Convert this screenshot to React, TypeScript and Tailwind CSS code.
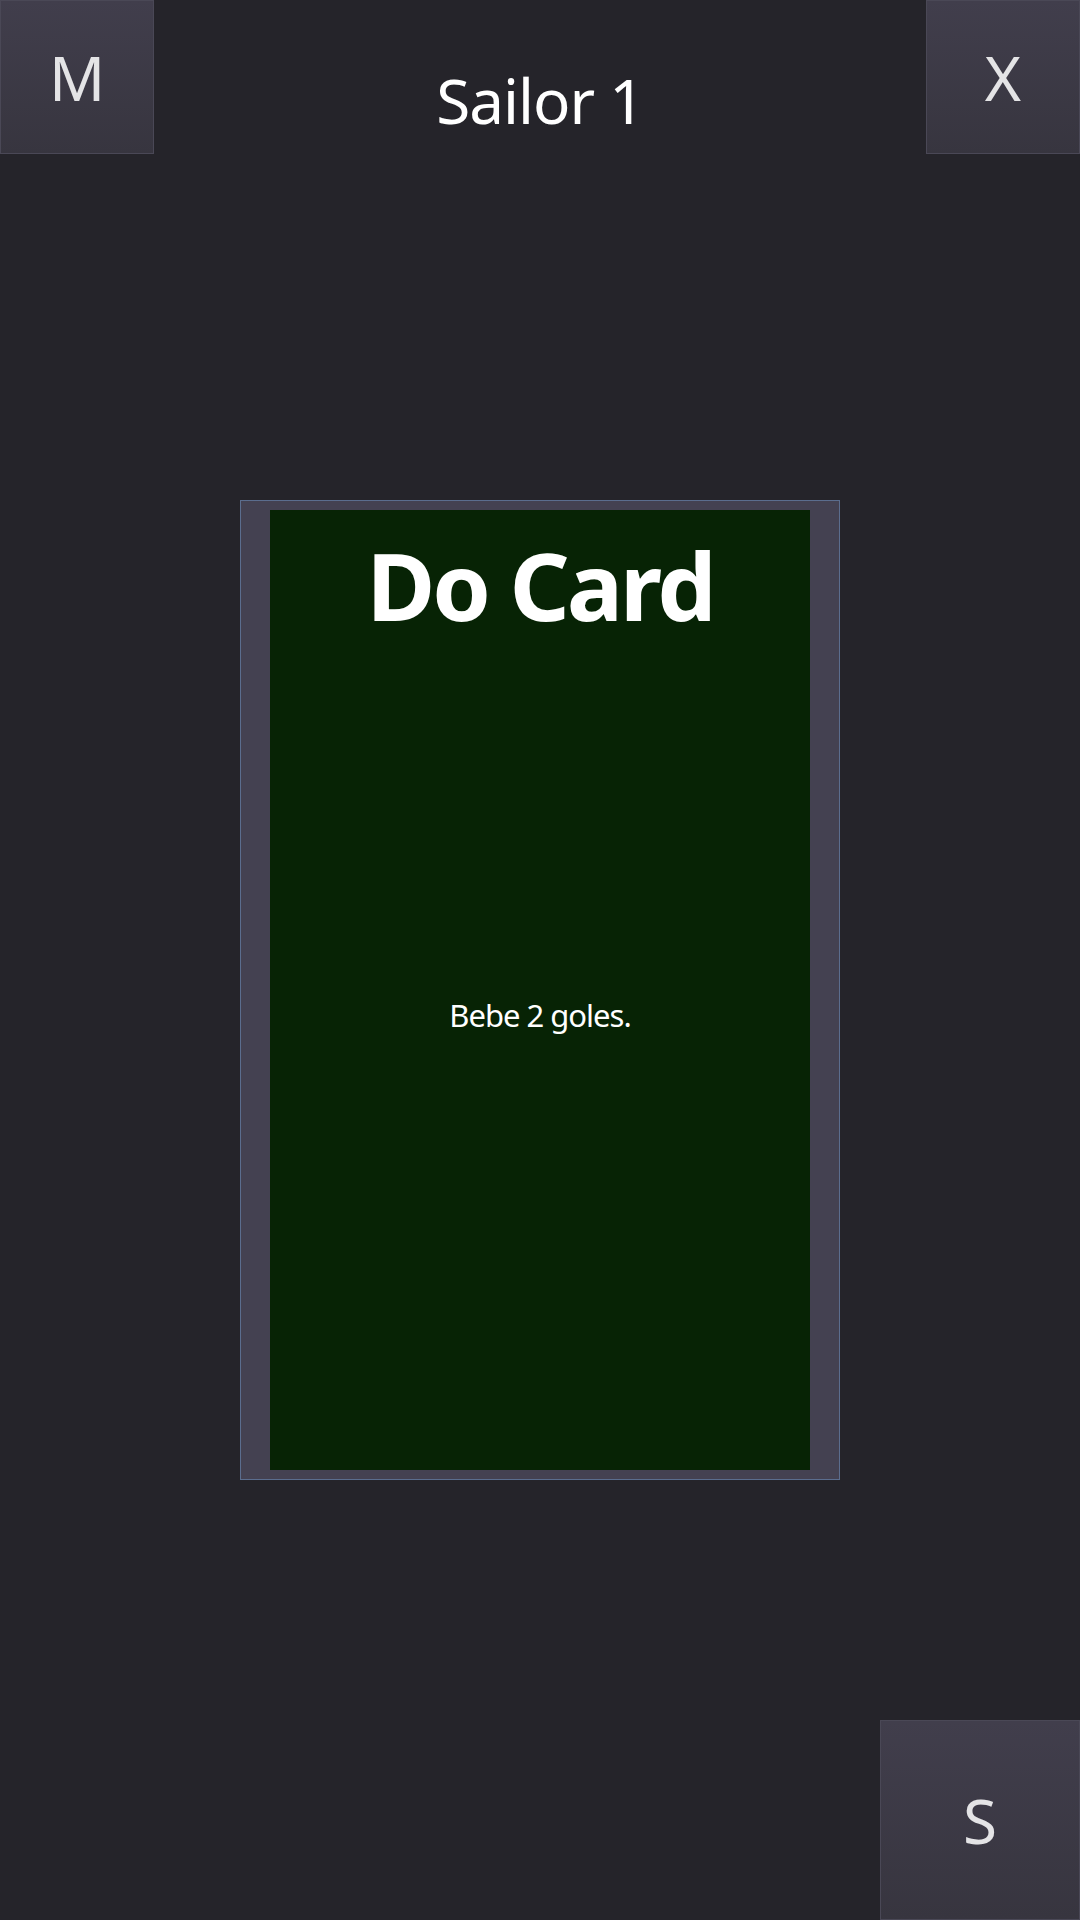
// @ts-nocheck
const FONT = { fontFamily: '"Noto Sans", "Open Sans", sans-serif' }

function SquareButton({ label, className = "" }: { label: string; className?: string }) {
  return (
    <button
      className={`flex items-center justify-center border border-[#4a4856] bg-gradient-to-b from-[#413e4c] to-[#37353f] text-[62px] font-normal text-[#e4e4e6] ${className}`}
    >
      {label}
    </button>
  )
}

export default function App() {
  return (
    <div style={FONT} className="flex h-[1920px] w-[1080px] flex-col bg-[#25242a] overflow-hidden">
      {/* top bar */}
      <div className="flex h-[154px] items-start justify-between">
        <SquareButton label="M" className="h-[154px] w-[154px]" />
        <h1 className="mt-[69px] text-[62px] leading-none font-normal tracking-[-1px] text-white">Sailor 1</h1>
        <SquareButton label="X" className="h-[154px] w-[154px]" />
      </div>

      {/* card */}
      <div className="mt-[346px] flex justify-center">
        <div className="h-[980px] w-[600px] border border-[#5b6d8e] bg-[#444151] px-[29px] py-[9px]">
          <div className="flex h-full w-full flex-col items-center bg-[#072305] text-white">
            <h2 className="mt-[28px] text-[94px] leading-none font-bold tracking-[-3px]">Do Card</h2>
            <p className="mt-[368px] text-[31px] leading-none tracking-[-1px]">Bebe 2 goles.</p>
          </div>
        </div>
      </div>

      {/* bottom */}
      <div className="mt-[240px] flex justify-end">
        <SquareButton label="S" className="h-[200px] w-[200px]" />
      </div>
    </div>
  )
}
